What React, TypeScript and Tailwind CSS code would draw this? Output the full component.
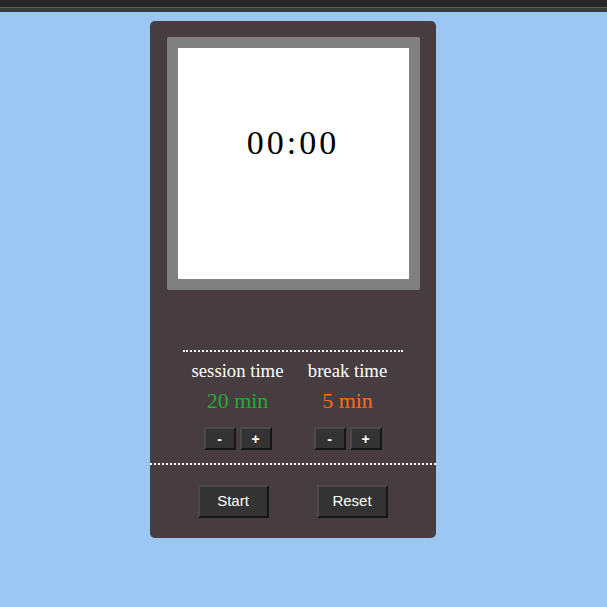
const serif = { fontFamily: '"Liberation Serif", "Times New Roman", serif' }

function StepButton({ label }: { label: string }) {
  return (
    <button className="w-[32px] h-[23px] bg-[#333333] text-white text-[14px] leading-none font-bold font-['Liberation_Sans',Arial,sans-serif] border-2 border-t-[#4a4a4a] border-l-[#4a4a4a] border-b-[#151515] border-r-[#151515]">
      {label}
    </button>
  )
}

function Setting({ title, value, color }: { title: string; value: string; color: string }) {
  return (
    <div className="w-[110px] flex flex-col items-center">
      <div className="text-white text-[18.7px] leading-[22px]" style={serif}>{title}</div>
      <div className={`${color} text-[22px] leading-[26px] mt-[6px]`} style={serif}>{value}</div>
      <div className="flex gap-[4px] mt-[13px]">
        <StepButton label="-" />
        <StepButton label="+" />
      </div>
    </div>
  )
}

function BigButton({ label }: { label: string }) {
  return (
    <button className="w-[71px] h-[33px] bg-[#333333] text-white text-[15px] font-['Liberation_Sans',Arial,sans-serif] border-2 border-t-[#4a4a4a] border-l-[#4a4a4a] border-b-[#151515] border-r-[#151515]">
      {label}
    </button>
  )
}

export default function App() {
  return (
    <div className="min-h-[607px] bg-[#9bc7f3]">
      {/* top strip */}
      <div className="h-[12px] bg-[#3a3a3a] flex flex-col">
        <div className="h-[7px] bg-[#272727]" />
        <div className="h-[1px] bg-[#606060]" />
      </div>

      <div className="flex justify-center pt-[9px]">
        <div className="w-[286px] h-[517px] bg-[#473d40] rounded-[5px] ml-[-22px] flex flex-col">
          {/* clock face */}
          <div className="ml-[17px] mt-[16px] w-[253px] h-[253px] bg-[#808080] rounded-[2px] p-[11px]">
            <div className="w-full h-full bg-white flex justify-center pt-[75px]">
              <div className="text-black text-[34px] leading-[40px] tracking-[3px]" style={serif}>
                00:00
              </div>
            </div>
          </div>

          {/* settings */}
          <div className="mx-auto mt-[60px] w-[220px] border-t-2 border-dotted border-white" />
          <div className="mx-auto w-[220px] flex mt-[8px]">
            <Setting title="session time" value="20 min" color="text-[#1fae35]" />
            <Setting title="break time" value="5 min" color="text-[#fd6b16]" />
          </div>

          <div className="mt-[13px] w-full border-t-2 border-dotted border-white" />

          <div className="flex justify-center gap-[48px] mt-[20px]">
            <BigButton label="Start" />
            <BigButton label="Reset" />
          </div>
        </div>
      </div>
    </div>
  )
}
